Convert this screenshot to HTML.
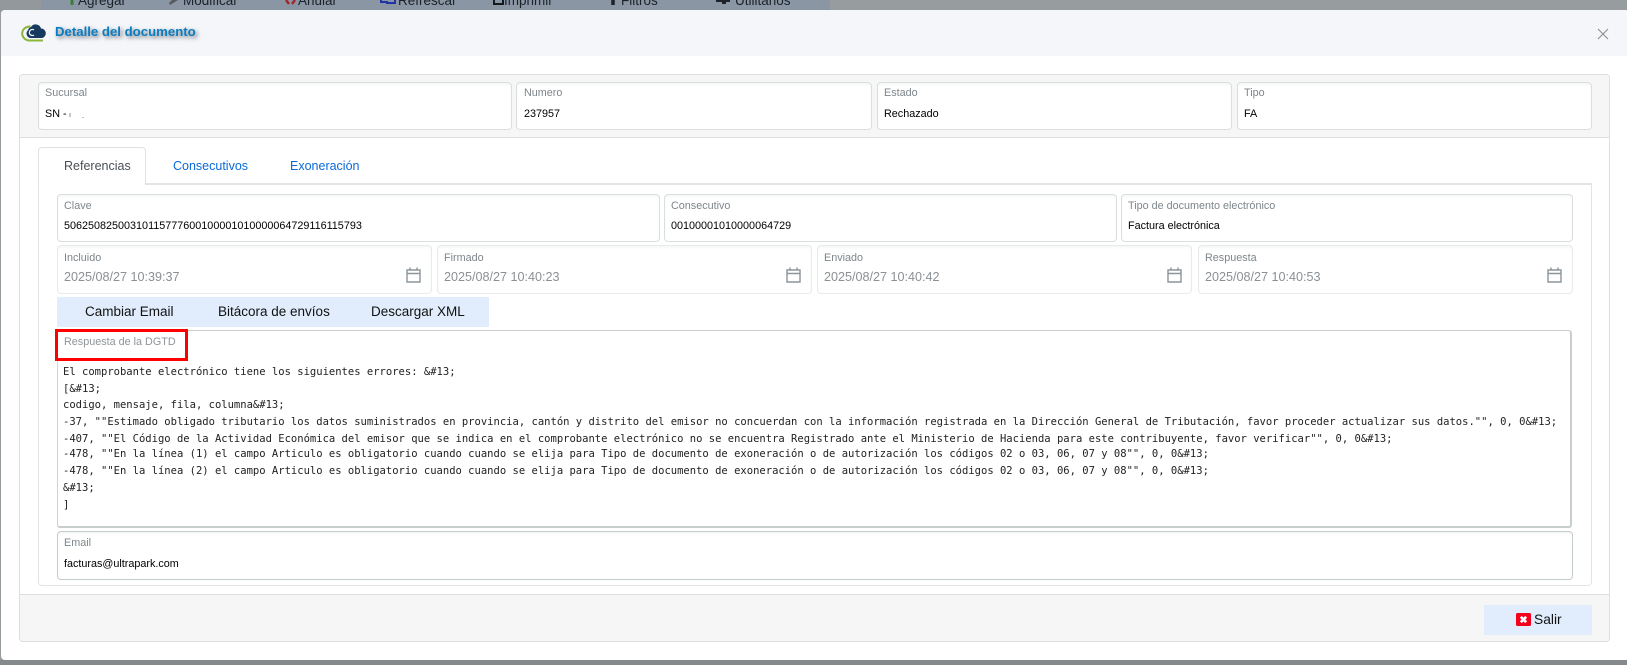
<!DOCTYPE html>
<html lang="es"><head><meta charset="utf-8"><title>Detalle del documento</title>
<style>
html,body{margin:0;padding:0;width:1627px;height:665px;overflow:hidden;background:#979c9f;font-family:"Liberation Sans",Arial,sans-serif}
div,span{position:absolute;box-sizing:border-box;white-space:pre}
.f{background:#fff;border:1px solid #d9dfdf;border-radius:4px;box-shadow:inset 0 2px 3px -1px #f0f2f2}
.l{font-size:10.8px;line-height:14px;color:#7d868c}
.v{font-size:10.8px;line-height:14px;color:#000}
.d{font-size:12.6px;line-height:16px;color:#8a9094}
.t{font-size:12.5px;line-height:16px;top:158px;color:#0a6ad8}
.b{font-size:13.5px;line-height:18px;top:303px;color:#111}
.m{left:63px;font-family:"DejaVu Sans Mono","Liberation Mono",monospace;font-size:10.53px;line-height:14px;color:#222}
.tb{top:-7px;font-size:13.5px;line-height:16px;color:#1b2128}
svg{position:absolute;display:block}
</style></head><body>
<div style="left:41px;top:0;width:789px;height:10px;background:#8a96a4"></div>
<div style="left:0;top:0;width:41px;height:10px;background:#92989b"></div>
<span class="tb" style="left:78px">Agregar</span>
<span class="tb" style="left:183px">Modificar</span>
<span class="tb" style="left:298px">Anular</span>
<span class="tb" style="left:398px">Refrescar</span>
<span class="tb" style="left:504px">Imprimir</span>
<span class="tb" style="left:621px">Filtros</span>
<span class="tb" style="left:735px">Utilitarios</span>
<svg style="left:68px;top:0" width="700" height="10" viewBox="0 0 700 10">
<path d="M4 0V5" stroke="#3c7d3a" stroke-width="3"/>
<path d="M102 5L110 0H104L101 3Z" fill="#555b61"/>
<path d="M218 0L221 4M227 0L224 4" stroke="#a5262c" stroke-width="2.500"/>
<path d="M313 0V2H320M327 0V3H318" stroke="#2233a8" stroke-width="2" fill="none"/>
<path d="M426 0V4H435V0" stroke="#15181c" stroke-width="2" fill="none"/>
<path d="M545 0V5" stroke="#1d2229" stroke-width="3.500"/>
<path d="M648 0H662V2H658V4H654V2H648Z" fill="#1d2229"/>
</svg>

<div style="left:1px;top:10px;width:1626px;height:650px;background:#fff;border-radius:4px 0 0 4px"></div>
<div style="left:1px;top:10px;width:1626px;height:46px;background:#f4f6fa;border-radius:4px 0 0 0"></div>
<div style="left:0;top:660px;width:1627px;height:5px;background:#858a8d"></div>

<svg style="left:21px;top:23px" width="26" height="20" viewBox="0 0 26 20">
<path d="M9.500 3.500A7 6.500 0 0 0 8 17.500H22" fill="none" stroke="#8cb63c" stroke-width="2"/>
<path d="M10 15a4.500 4.500 0 0 1-3-7.800A4.500 4.500 0 0 1 10 4A5.500 5.500 0 0 1 20 5.500a4.800 4.800 0 0 1 1 9.500z" fill="#15395f"/>
<path d="M13 7A3 3 0 1 0 13 12" fill="none" stroke="#f4f6fa" stroke-width="1.300"/>
</svg>
<span style="left:55px;top:24px;font-size:13.2px;line-height:16px;font-weight:bold;color:#0a7cc0;text-shadow:2px 2px 4px #6b7078">Detalle del documento</span>
<svg style="left:1597px;top:28px" width="12" height="12" viewBox="0 0 12 12"><path d="M1 1L11 11M11 1L1 11" stroke="#85898d" stroke-width="1" fill="none"/></svg>

<div style="left:19px;top:74px;width:1591px;height:568px;border:1px solid #dcdedf;border-radius:4px;background:#fff"></div>
<div style="left:20px;top:75px;width:1589px;height:63px;background:#f6f6f6;border-bottom:1px solid #dcdedf;border-radius:3px 3px 0 0"></div>
<div style="left:20px;top:594px;width:1589px;height:47px;background:#f6f6f6;border-top:1px solid #dcdedf;border-radius:0 0 3px 3px"></div>

<div class="f" style="left:38px;top:82px;width:474px;height:48px"></div>
<span class="l" style="left:45px;top:86px">Sucursal</span><span class="v" style="left:45px;top:107px">SN -</span>
<span class="v" style="left:69px;top:109px;font-size:7px;color:#555">ı</span><span class="v" style="left:82px;top:110px;font-size:7px">.</span>
<div class="f" style="left:516px;top:82px;width:356px;height:48px"></div>
<span class="l" style="left:524px;top:86px">Numero</span><span class="v" style="left:524px;top:107px">237957</span>
<div class="f" style="left:877px;top:82px;width:355px;height:48px"></div>
<span class="l" style="left:884px;top:86px">Estado</span><span class="v" style="left:884px;top:107px">Rechazado</span>
<div class="f" style="left:1237px;top:82px;width:355px;height:48px"></div>
<span class="l" style="left:1244px;top:86px">Tipo</span><span class="v" style="left:1244px;top:107px">FA</span>

<div style="left:38px;top:183px;width:1554px;height:403px;border:1px solid #e2e4e5;border-top:2px solid #e2e4e5;border-radius:0 0 4px 4px"></div>
<div style="left:38px;top:147px;width:108px;height:38px;background:#fff;border:1px solid #dee2e6;border-bottom:0;border-radius:4px 4px 0 0"></div>
<span class="t" style="left:64px;color:#495057">Referencias</span>
<span class="t" style="left:173px">Consecutivos</span>
<span class="t" style="left:290px">Exoneración</span>

<div class="f" style="left:57px;top:194px;width:603px;height:48px"></div>
<span class="l" style="left:64px;top:199px">Clave</span><span class="v" style="left:64px;top:219px">50625082500310115777600100001010000064729116115793</span>
<div class="f" style="left:664px;top:194px;width:453px;height:48px"></div>
<span class="l" style="left:671px;top:199px">Consecutivo</span><span class="v" style="left:671px;top:219px">00100001010000064729</span>
<div class="f" style="left:1121px;top:194px;width:452px;height:48px"></div>
<span class="l" style="left:1128px;top:199px">Tipo de documento electrónico</span><span class="v" style="left:1128px;top:219px">Factura electrónica</span>

<div class="f" style="left:57px;top:245px;width:375px;height:49px;border-color:#e8ebeb"></div>
<span class="l" style="left:64px;top:251px">Incluido</span><span class="d" style="left:64px;top:269px">2025/08/27 10:39:37</span>
<svg style="left:406px;top:267px" width="15" height="16" viewBox="0 0 15 16"><path d="M1 3H14V15H1ZM1 6.500H14M4 .5V3M11 .5V3" fill="none" stroke="#8b959a" stroke-width="1.400"/></svg>
<div class="f" style="left:437px;top:245px;width:375px;height:49px;border-color:#e8ebeb"></div>
<span class="l" style="left:444px;top:251px">Firmado</span><span class="d" style="left:444px;top:269px">2025/08/27 10:40:23</span>
<svg style="left:786px;top:267px" width="15" height="16" viewBox="0 0 15 16"><path d="M1 3H14V15H1ZM1 6.500H14M4 .5V3M11 .5V3" fill="none" stroke="#8b959a" stroke-width="1.400"/></svg>
<div class="f" style="left:817px;top:245px;width:375px;height:49px;border-color:#e8ebeb"></div>
<span class="l" style="left:824px;top:251px">Enviado</span><span class="d" style="left:824px;top:269px">2025/08/27 10:40:42</span>
<svg style="left:1167px;top:267px" width="15" height="16" viewBox="0 0 15 16"><path d="M1 3H14V15H1ZM1 6.500H14M4 .5V3M11 .5V3" fill="none" stroke="#8b959a" stroke-width="1.400"/></svg>
<div class="f" style="left:1198px;top:245px;width:375px;height:49px;border-color:#e8ebeb"></div>
<span class="l" style="left:1205px;top:251px">Respuesta</span><span class="d" style="left:1205px;top:269px">2025/08/27 10:40:53</span>
<svg style="left:1547px;top:267px" width="15" height="16" viewBox="0 0 15 16"><path d="M1 3H14V15H1ZM1 6.500H14M4 .5V3M11 .5V3" fill="none" stroke="#8b959a" stroke-width="1.400"/></svg>

<div style="left:57px;top:297px;width:432px;height:30px;background:#e1edfc"></div>
<span class="b" style="left:85px">Cambiar Email</span>
<span class="b" style="left:218px">Bitácora de envíos</span>
<span class="b" style="left:371px">Descargar XML</span>

<div style="left:57px;top:330px;width:1515px;height:198px;background:#fff;border:1px solid #cfd3d3;border-top:1.500px solid #cdcdcd;border-right:2px solid #c8cdcd;border-bottom:2px solid #c8cdcd;border-radius:3px"></div>
<span class="l" style="left:64px;top:335px;color:#8e9498">Respuesta de la DGTD</span>
<span class="m" style="top:365px">El comprobante electrónico tiene los siguientes errores: &amp;#13;</span>
<span class="m" style="top:382px">[&amp;#13;</span>
<span class="m" style="top:398px">codigo, mensaje, fila, columna&amp;#13;</span>
<span class="m" style="top:415px">-37, ""Estimado obligado tributario los datos suministrados en provincia, cantón y distrito del emisor no concuerdan con la información registrada en la Dirección General de Tributación, favor proceder actualizar sus datos."", 0, 0&amp;#13;</span>
<span class="m" style="top:432px">-407, ""El Código de la Actividad Económica del emisor que se indica en el comprobante electrónico no se encuentra Registrado ante el Ministerio de Hacienda para este contribuyente, favor verificar"", 0, 0&amp;#13;</span>
<span class="m" style="top:447px">-478, ""En la línea (1) el campo Articulo es obligatorio cuando cuando se elija para Tipo de documento de exoneración o de autorización los códigos 02 o 03, 06, 07 y 08"", 0, 0&amp;#13;</span>
<span class="m" style="top:464px">-478, ""En la línea (2) el campo Articulo es obligatorio cuando cuando se elija para Tipo de documento de exoneración o de autorización los códigos 02 o 03, 06, 07 y 08"", 0, 0&amp;#13;</span>
<span class="m" style="top:481px">&amp;#13;</span>
<span class="m" style="top:498px">]</span>

<div style="left:55px;top:329px;width:133px;height:32px;border:3px solid #f00"></div>

<div class="f" style="left:57px;top:531px;width:1516px;height:49px;border-color:#c5cccc"></div>
<span class="l" style="left:64px;top:536px">Email</span><span class="v" style="left:64px;top:557px">facturas@ultrapark.com</span>

<div style="left:1484px;top:605px;width:108px;height:30px;background:#e1edfc"></div>
<svg style="left:1516px;top:613px" width="15" height="13" viewBox="0 0 15 13"><rect width="15" height="13" rx="1.500" fill="#f4001c"/><path d="M4.800 3.800L10.200 9.200M10.200 3.800L4.800 9.200" stroke="#fff" stroke-width="2.600" fill="none"/></svg>
<span style="left:1534px;top:611px;font-size:13.8px;line-height:18px;color:#111">Salir</span>
</body></html>
